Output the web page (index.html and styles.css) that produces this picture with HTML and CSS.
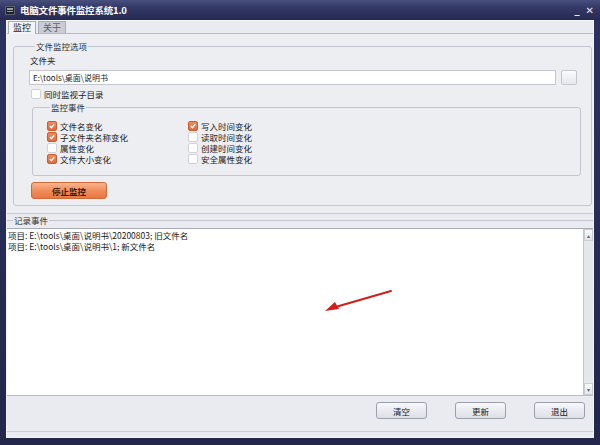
FILE: index.html
```html
<!DOCTYPE html>
<html lang="zh">
<head>
<meta charset="utf-8">
<title>电脑文件事件监控系统1.0</title>
<link rel="stylesheet" href="styles.css">
</head>
<body>
<div class="window">
  <div class="titlebar">
    <span class="app-icon"><i></i><i></i><i></i></span>
    <span class="title">电脑文件事件监控系统1.0</span>
    <span class="winbtns"><span class="minbtn">_</span><span class="closebtn">✕</span></span>
  </div>
  <div class="client">
    <div class="tabs">
      <span class="tab active">监控</span>
      <span class="tab">关于</span>
    </div>
    <div class="tabpanel">
      <fieldset class="group outer">
        <legend>文件监控选项</legend>
        <div class="lbl">文件夹</div>
        <div class="pathrow">
          <div class="input">E:\tools\桌面\说明书</div>
          <span class="browse"></span>
        </div>
        <label class="cbrow sub"><span class="cb"></span>同时监视子目录</label>
        <fieldset class="group inner">
          <legend>监控事件</legend>
          <div class="events">
            <div class="col">
              <label class="cbrow"><span class="cb on"><svg viewBox="0 0 9 9"><path d="M2 4.6 L3.8 6.4 L7 2.6" /></svg></span>文件名变化</label>
              <label class="cbrow"><span class="cb on"><svg viewBox="0 0 9 9"><path d="M2 4.6 L3.8 6.4 L7 2.6" /></svg></span>子文件夹名称变化</label>
              <label class="cbrow"><span class="cb"></span>属性变化</label>
              <label class="cbrow"><span class="cb on"><svg viewBox="0 0 9 9"><path d="M2 4.6 L3.8 6.4 L7 2.6" /></svg></span>文件大小变化</label>
            </div>
            <div class="col">
              <label class="cbrow"><span class="cb on"><svg viewBox="0 0 9 9"><path d="M2 4.6 L3.8 6.4 L7 2.6" /></svg></span>写入时间变化</label>
              <label class="cbrow"><span class="cb"></span>读取时间变化</label>
              <label class="cbrow"><span class="cb"></span>创建时间变化</label>
              <label class="cbrow"><span class="cb"></span>安全属性变化</label>
            </div>
          </div>
        </fieldset>
        <button class="btn-orange">停止监控</button>
      </fieldset>
    </div>
    <fieldset class="logset">
      <legend>记录事件</legend>
      <div class="logwrap">
        <div class="log">
          <div>项目: E:\tools\桌面\说明书\20200803; 旧文件名</div>
          <div>项目: E:\tools\桌面\说明书\1; 新文件名</div>
          <svg class="arrow" viewBox="0 0 80 30" width="80" height="30">
            <path d="M73 4 L14 21" stroke="#d01e1e" stroke-width="2" fill="none" stroke-linecap="round"/>
            <polygon points="7,24 17,15 21,22" fill="#d01e1e"/>
          </svg>
        </div>
        <div class="scrollbar">
          <span class="sbtn">▴</span>
          <span class="strack"></span>
          <span class="sbtn">▾</span>
        </div>
      </div>
    </fieldset>
    <div class="bottombar">
      <button class="btn">清空</button>
      <button class="btn">更新</button>
      <button class="btn">退出</button>
    </div>
  </div>
</div>
</body>
</html>
```
FILE: styles.css
```css
* { box-sizing: border-box; }
html, body { margin: 0; padding: 0; background: #252a50; }
body { font-family: "Noto Sans CJK SC", "Noto Sans", sans-serif; font-size: 8.5px; color: #1a1a1a; }

.window {
  width: 600px; height: 445px;
  background: linear-gradient(#2c3260, #22274b);
  display: flex; flex-direction: column;
  padding: 0 6px 7px 6px;
}
.titlebar {
  height: 20px; flex: none;
  display: flex; align-items: center;
  margin: 0 -6px; padding: 0 6px 0 5px;
  background: linear-gradient(#4a507e 0%, #343a68 35%, #252a52 100%);
  color: #fff;
}
.app-icon {
  width: 10px; height: 9px; background: #1d2128; border: 1px solid #5a6070;
  display: flex; flex-direction: column; justify-content: space-around; padding: 1px;
  margin-right: 5px;
}
.app-icon i { display: block; height: 1px; background: #9aa3a0; }
.title { font-weight: bold; font-size: 9.5px; letter-spacing: -0.2px; }
.winbtns { margin-left: auto; display: flex; gap: 6px; align-items: center; color: #e6e8f0; font-size: 10px; font-family: "DejaVu Sans", sans-serif; }
.minbtn { font-weight: bold; line-height: 8px; }
.closebtn { font-weight: bold; font-size: 10px; }

.client {
  flex: 1; display: flex; flex-direction: column;
  background: #e9ebf0;
  border: 1px solid #f4f5f8;
}
.tabs { height: 12px; flex: none; display: flex; align-items: flex-end; padding-left: 1px; gap: 2px; }
.tab {
  height: 12px; line-height: 11px; padding: 0 4px;
  border: 1px solid #a9adb8; border-bottom: none;
  background: #c9ccd5; color: #5d606c; font-size: 9px;
}
.tab.active { background: #f3f4f7; color: #1a1a1a; height: 13px; margin-bottom: -1px; position: relative; }

.tabpanel {
  flex: none; height: 181px;
  border-top: 1px solid #b4b8c2;
  border-bottom: 1px solid #c6c9d1;
  padding: 7px 5px 0 6px;
  background: #eceef2;
}
fieldset.group {
  margin: 0; border: 1px solid #c3c6ce; border-radius: 3px;
}
fieldset legend { padding: 0 1px; line-height: 10px; color: #333; font-size: 8.5px; }
fieldset.outer { height: 165px; padding: 3px 10px 0 15px; }
.outer > legend { margin-left: 6px; }
.lbl { line-height: 10px; height: 16px; padding-left: 1px; padding-top: 1px; color: #222; }
.pathrow { display: flex; align-items: center; gap: 5px; height: 15px; }
.input {
  width: 527px; height: 15px; background: #fff;
  border: 1px solid #c3c6cf; line-height: 13px; padding-left: 3px; font-size: 8px; color: #222;
}
.browse {
  width: 16px; height: 15px; border: 1px solid #c3c6cf; border-radius: 2px;
  background: linear-gradient(#fbfbfd, #e5e7ec);
}
.cbrow { display: flex; align-items: center; height: 11px; line-height: 10px; gap: 3px; color: #222; }
.sub { margin-top: 3px; margin-left: 2px; height: 11px; }
.cb {
  width: 10px; height: 10px; flex: none;
  background: #fff; border: 1px solid #d1d3da; border-radius: 2px;
  display: flex; align-items: center; justify-content: center;
}
.cb.on { background: linear-gradient(#f08a5c, #e06a38); border-color: #c85d30; }
.cb svg { width: 8px; height: 8px; }
.cb svg path { stroke: #fff; stroke-width: 1.6; fill: none; }

fieldset.inner { height: 74px; margin: 3px 0 0 3px; width: 549px; padding: 8px 0 0 14px; }
.inner > legend { margin-left: 3px; }
.events { display: flex; }
.events .col { width: 141px; display: flex; flex-direction: column; }

.btn-orange {
  margin-top: 6px; margin-left: 2px;
  width: 76px; height: 17px;
  font-family: inherit; font-size: 8.5px; font-weight: bold; color: #3a1a08;
  background: linear-gradient(#f9b48c, #ef8a58 55%, #e97844);
  border: 1px solid #d06a3a; border-radius: 3px; padding: 0;
}

.logset {
  margin: 0; padding: 0; border: none; border-top: 1px solid #c3c6ce;
  margin-top: 1px; flex: none;
}
.logset > legend { margin-left: 6px; padding: 0 1px; }
.logwrap { display: flex; height: 167px; margin-top: 3px; }
.log {
  flex: 1; background: #fff; position: relative;
  padding: 1px 0 0 1px; line-height: 11px; font-size: 8.5px; color: #1a1a1a;
  border-top: 1px solid #a8acb6;
}
.arrow { position: absolute; left: 311px; top: 58px; }
.scrollbar {
  width: 10px; display: flex; flex-direction: column;
  background: #e4e6eb; border-left: 1px solid #c4c7cf; border-top: 1px solid #a8acb6;
}
.sbtn {
  height: 12px; flex: none; font-size: 6px; color: #666; text-align: center; line-height: 11px;
  background: linear-gradient(#fafbfc, #e3e5ea); border: 1px solid #c9ccd3;
}
.strack { flex: 1; }

.bottombar {
  flex: 1; display: flex; justify-content: flex-end; align-items: flex-start;
  gap: 28px; padding: 6px 8px 0 0;
  border-top: 1px solid #b9bcc6;
  border-bottom: 1px solid #c9ccd4;
  margin-bottom: 5px;
}
.btn {
  width: 51px; height: 17px; padding: 0;
  font-family: inherit; font-size: 8.5px; color: #1a1a1a;
  background: linear-gradient(#f7f8fa, #dcdfe6);
  border: 1px solid #9ca0ab; border-radius: 3px;
}
```
